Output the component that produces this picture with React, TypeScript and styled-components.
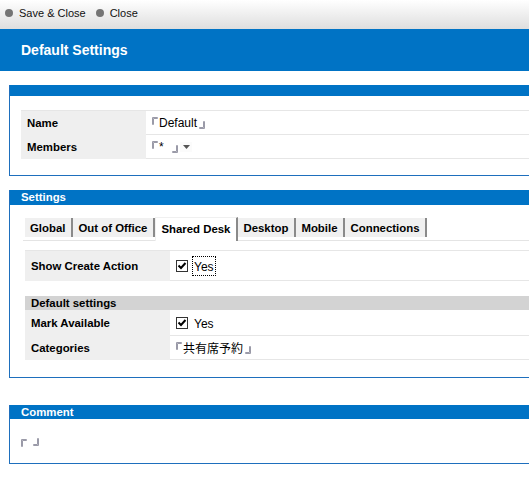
import styled, { createGlobalStyle } from "styled-components"

const GlobalStyle = createGlobalStyle`
  body {
    margin: 0;
    background: #ffffff;
    font-family: "Liberation Sans", Arial, "Noto Sans CJK JP", sans-serif;
    font-size: 12px;
    color: #000;
  }
`

const Page = styled.div`
  width: 529px;
  height: 484px;
  overflow: hidden;
`

const Toolbar = styled.div`
  height: 29px;
  box-sizing: border-box;
  display: flex;
  align-items: center;
  padding: 0 0 3px 5px;
  gap: 10px;
  background: linear-gradient(#ffffff, #dedede);
`

const ToolButton = styled.span`
  display: flex;
  align-items: center;
  gap: 6px;
  font-size: 11px;
  color: #111;
  &::before {
    content: "";
    width: 8px;
    height: 8px;
    border-radius: 50%;
    background: #747474;
  }
`

const Header = styled.div`
  height: 42px;
  background: #0073c5;
  color: #fff;
  font-weight: bold;
  font-size: 14px;
  display: flex;
  align-items: center;
  padding-left: 21px;
`

const Body = styled.div`
  padding: 14px 0 0 9px;
  display: flex;
  flex-direction: column;
`

const Section = styled.div<{ $gap?: number }>`
  margin-top: ${(p) => p.$gap ?? 0}px;
  border-left: 1px solid #1e6fbd;
  border-bottom: 1px solid #1e6fbd;
`

const SectionBar = styled.div<{ $h: number }>`
  height: ${(p) => p.$h}px;
  background: #0073c5;
  color: #fff;
  font-weight: bold;
  font-size: 11.4px;
  line-height: ${(p) => p.$h}px;
  padding-left: 11px;
`

const SectionBody = styled.div<{ $pad: string }>`
  padding: ${(p) => p.$pad};
`

const Table = styled.div<{ $label: number }>`
  display: grid;
  grid-template-columns: ${(p) => p.$label}px 1fr;
`

const Label = styled.div<{ $h: number }>`
  height: ${(p) => p.$h}px;
  background: #efefef;
  font-weight: bold;
  font-size: 11.4px;
  display: flex;
  align-items: center;
  padding-left: 6px;
  border-bottom: 1px solid #efefef;
  box-sizing: border-box;
`

const Value = styled.div<{ $h: number }>`
  height: ${(p) => p.$h}px;
  background: #fff;
  display: flex;
  align-items: center;
  padding-left: 6px;
  border-bottom: 1px solid #e6e6e6;
  box-sizing: border-box;
  font-size: 12px;
`

const TopLine = styled.div`
  grid-column: 1 / 3;
  height: 1px;
  background: #e6e6e6;
`

const SubHeader = styled.div`
  grid-column: 1 / 3;
  height: 14px;
  background: #d3d3d3;
  font-weight: bold;
  font-size: 11.4px;
  line-height: 14px;
  padding-left: 6px;
`

const Tabs = styled.div`
  display: flex;
  align-items: flex-end;
  height: 23px;
  border-bottom: 1px solid #e4e4e4;
  margin-left: -2px;
  padding-left: 2px;
`

const Tab = styled.div<{ $active?: boolean }>`
  height: ${(p) => (p.$active ? 24 : 19)}px;
  box-sizing: border-box;
  padding: 0 6px 0 5px;
  display: flex;
  align-items: center;
  font-weight: bold;
  font-size: 11.4px;
  background: ${(p) => (p.$active ? "#ffffff" : "#f0f0f0")};
  border-right: 2px solid #8a8a8a;
  border-top: ${(p) => (p.$active ? "1px solid #f0f0f0" : "none")};
  border-left: ${(p) => (p.$active ? "1px solid #f0f0f0" : "none")};
  margin-bottom: ${(p) => (p.$active ? -1 : 3)}px;
  padding-bottom: ${(p) => (p.$active ? 2 : 0)}px;
`

const Check = styled.span`
  width: 12px;
  height: 12px;
  box-sizing: border-box;
  border: 1px solid #333;
  background: #fff;
  display: inline-flex;
  margin-right: 5px;
`

const Focus = styled.span<{ $focus?: boolean }>`
  outline: ${(p) => (p.$focus ? "1px dotted #000" : "none")};
  padding: 3px 1px 1px 1px;
`

const Arrow = styled.span`
  width: 12px;
  height: 10px;
  display: inline-flex;
  align-items: center;
  justify-content: center;
  background: #fbfbfb;
  margin-left: 2px;
`

const CommentBody = styled.div`
  height: 44px;
  padding: 14px 0 0 11px;
  box-sizing: border-box;
`

const CommentMarks = styled.div`
  display: flex;
  height: 13px;
`

const MarkOpen = () => (
  <svg width="6" height="8" viewBox="0 0 6 8" style={{ alignSelf: "flex-start", marginTop: 6, marginRight: 1 }}>
    <path d="M0.5 7.5V0.5H5.5V1.5H1.5V7.5Z" fill="#fff" stroke="#9a9aa8" strokeWidth="1" />
  </svg>
)

const MarkClose = ({ low }: { low?: boolean }) => (
  <svg width="6" height="8" viewBox="0 0 6 8" style={{ alignSelf: "flex-end", marginBottom: low ? 0 : 5, marginLeft: 2 }}>
    <path d="M5.5 0.5V7.5H0.5V6.5H4.5V0.5Z" fill="#fff" stroke="#9a9aa8" strokeWidth="1" />
  </svg>
)

const CheckMark = () => (
  <svg width="10" height="10" viewBox="0 0 10 10">
    <path d="M1.5 4.5L4 7L8.5 2" fill="none" stroke="#000" strokeWidth="2" />
  </svg>
)

const App = () => {
  return (
    <Page>
      <GlobalStyle />
      <Toolbar>
        <ToolButton>Save &amp; Close</ToolButton>
        <ToolButton>Close</ToolButton>
      </Toolbar>
      <Header>Default Settings</Header>
      <Body>
        <Section>
          <SectionBar $h={11} />
          <SectionBody $pad="14px 0 16px 11px">
            <Table $label={125}>
              <TopLine />
              <Label $h={24}>Name</Label>
              <Value $h={24}>
                <MarkOpen />Default<MarkClose />
              </Value>
              <Label $h={24}>Members</Label>
              <Value $h={24}>
                <MarkOpen />*&nbsp;&nbsp;<MarkClose />
                <Arrow>
                  <svg width="7" height="4" viewBox="0 0 7 4">
                    <path d="M0 0H7L3.5 4Z" fill="#555" />
                  </svg>
                </Arrow>
              </Value>
            </Table>
          </SectionBody>
        </Section>

        <Section $gap={14}>
          <SectionBar $h={15}>Settings</SectionBar>
          <SectionBody $pad="12px 0 17px 15px">
            <Tabs>
              <Tab>Global</Tab>
              <Tab>Out of Office</Tab>
              <Tab $active>Shared Desk</Tab>
              <Tab>Desktop</Tab>
              <Tab>Mobile</Tab>
              <Tab>Connections</Tab>
            </Tabs>
            <Table $label={145} style={{ marginTop: 9 }}>
              <TopLine />
              <Label $h={30}>Show Create Action</Label>
              <Value $h={30}>
                <Check><CheckMark /></Check>
                <Focus $focus>Yes</Focus>
              </Value>
            </Table>
            <Table $label={145} style={{ marginTop: 15 }}>
              <SubHeader>Default settings</SubHeader>
              <Label $h={26}>Mark Available</Label>
              <Value $h={26}>
                <Check><CheckMark /></Check>
                <Focus>Yes</Focus>
              </Value>
              <Label $h={24}>Categories</Label>
              <Value $h={24}>
                <MarkOpen />共有席予約<MarkClose />
              </Value>
            </Table>
          </SectionBody>
        </Section>

        <Section $gap={27}>
          <SectionBar $h={14}>Comment</SectionBar>
          <CommentBody>
            <CommentMarks>
              <MarkOpen />&nbsp;<MarkClose low />
            </CommentMarks>
          </CommentBody>
        </Section>
      </Body>
    </Page>
  )
}

export default App
